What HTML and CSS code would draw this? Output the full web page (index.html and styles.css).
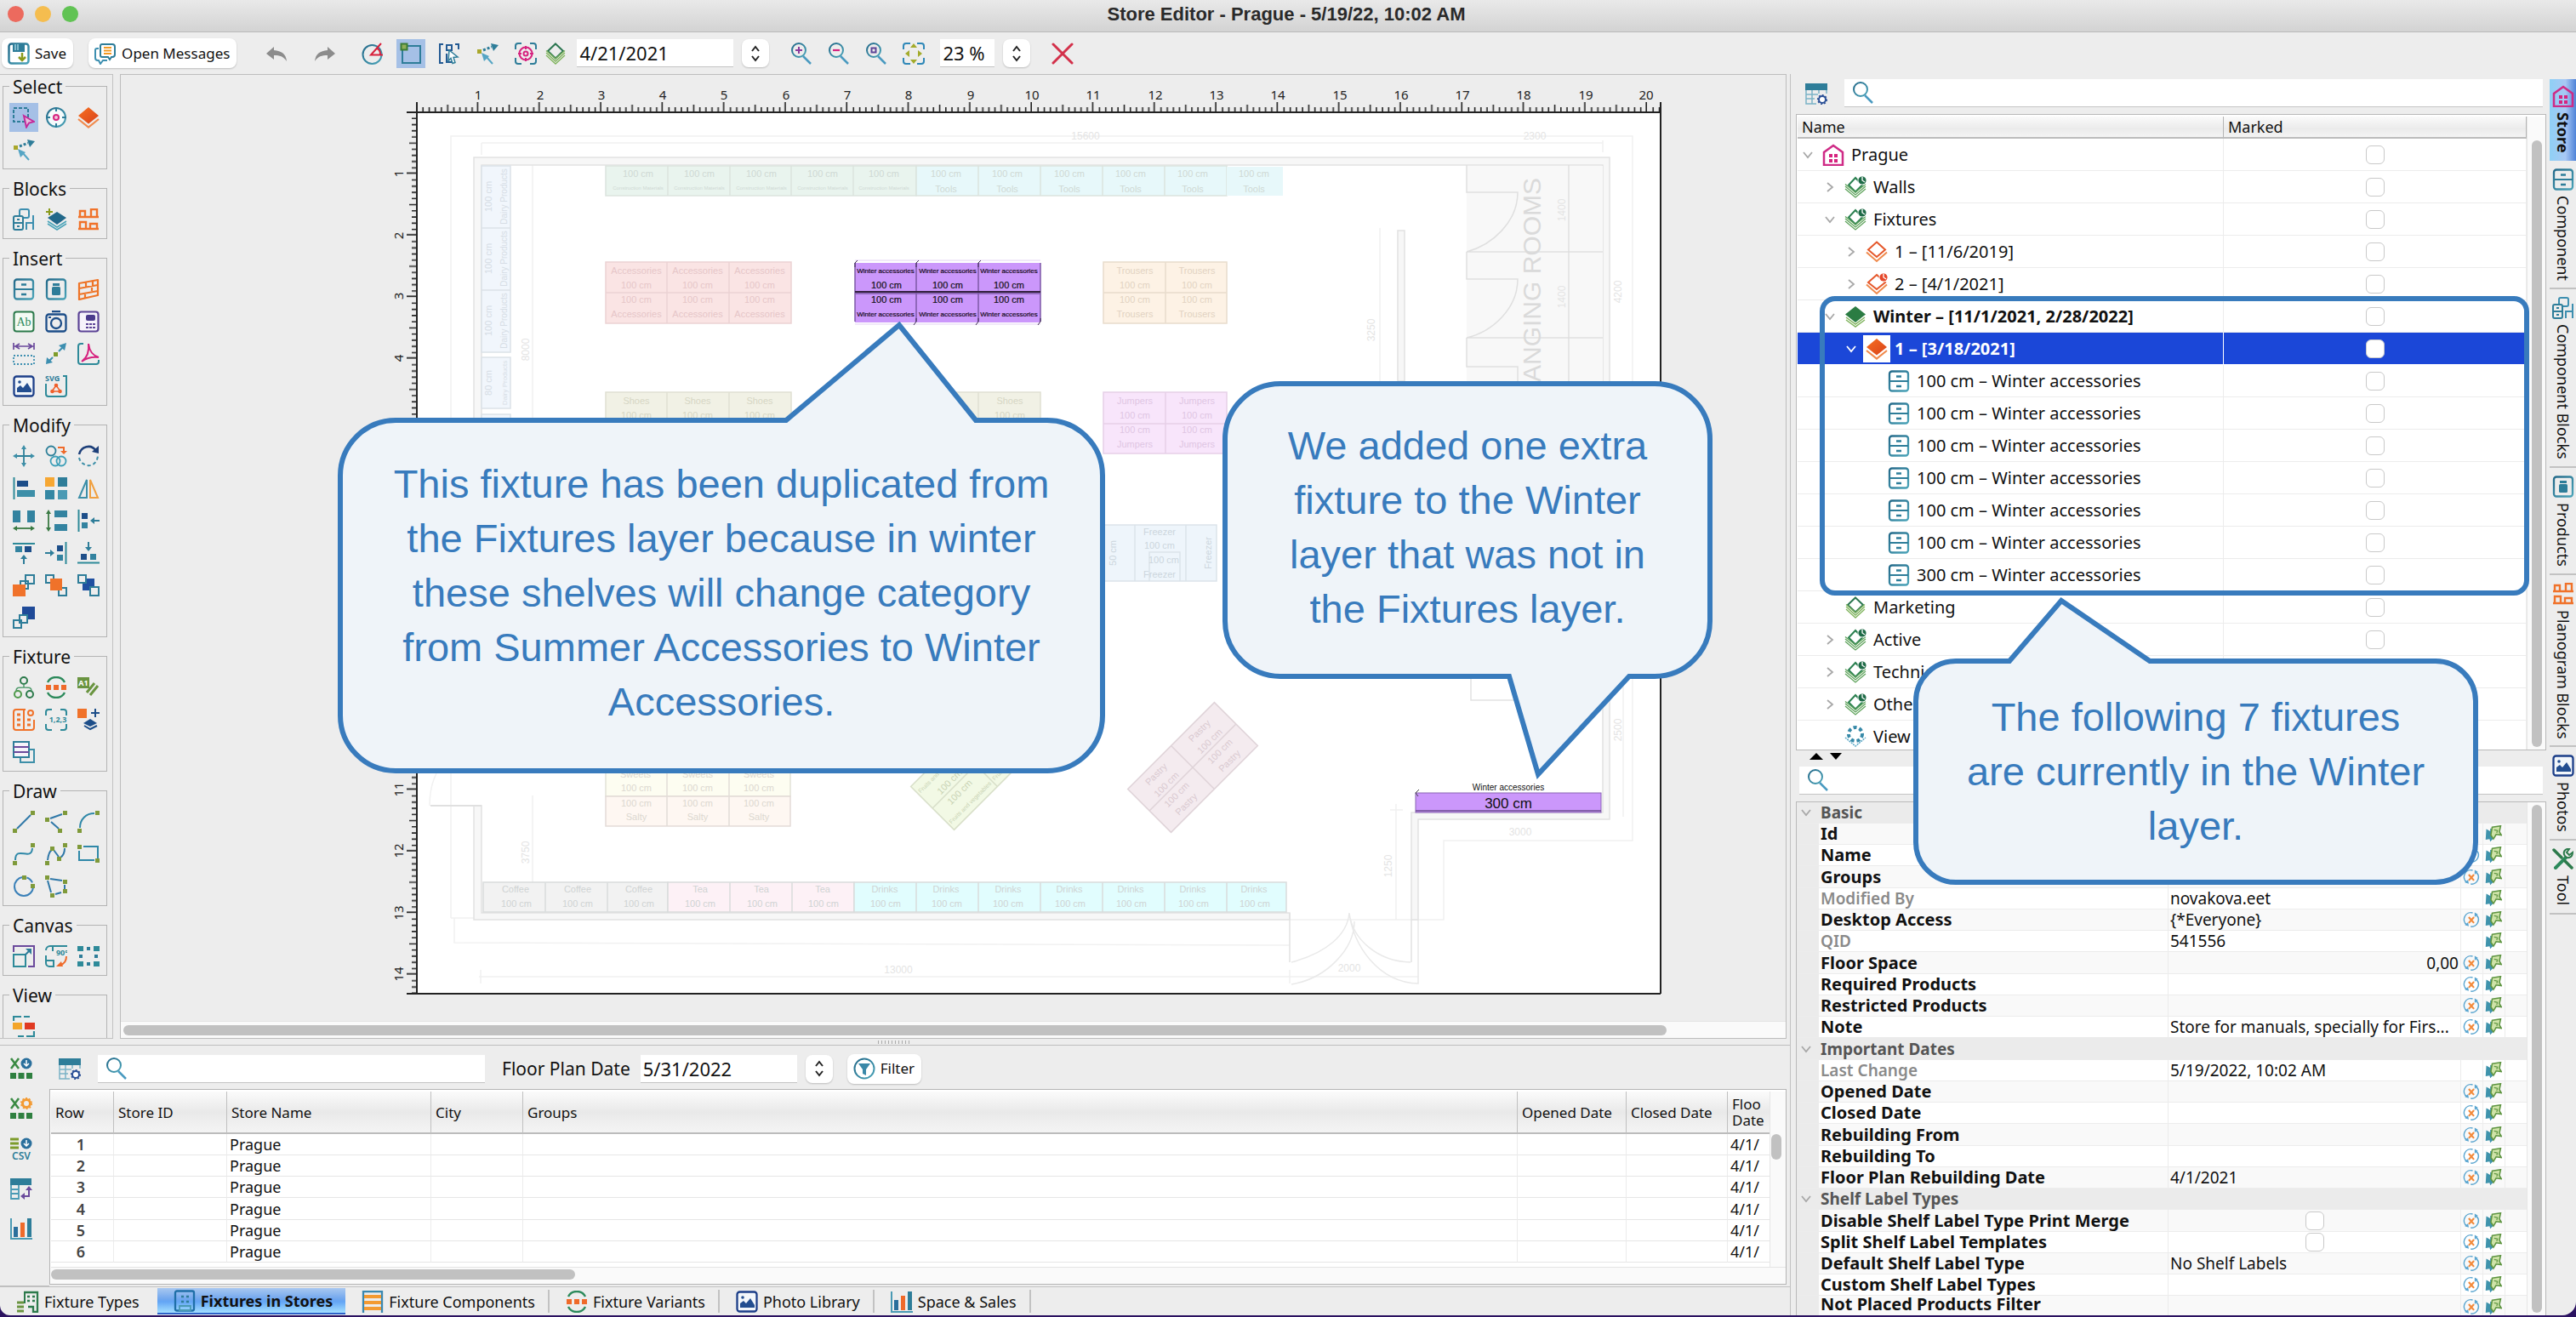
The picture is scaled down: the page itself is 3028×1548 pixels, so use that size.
FILE: index.html
```html
<!DOCTYPE html>
<html lang="en">
<head>
<meta charset="utf-8">
<title>Store Editor - Prague</title>
<link rel="stylesheet" href="styles.css">
</head>
<body>
<svg class="defs" aria-hidden="true">
  <defs>
    <linearGradient id="gt" x1="0" y1="0" x2="1" y2="1"><stop offset="0" stop-color="#246a8a"/><stop offset="1" stop-color="#4aa3b8"/></linearGradient>
    <linearGradient id="go" x1="0" y1="0" x2="1" y2="1"><stop offset="0" stop-color="#f7701f"/><stop offset="1" stop-color="#d9421c"/></linearGradient>
    <symbol id="save" viewBox="0 0 26 26"><rect x="1.500" y="1.500" width="23" height="23" rx="3" fill="#fff" stroke="url(#gt)" stroke-width="2.500"/><path d="M6 1h14v10H6z" fill="#2e7d99"/><path d="M9 2v7M12 2v7" stroke="#9fd0de" stroke-width="1.500"/><path d="M17 12v9M13 17l4 4 4-4" fill="none" stroke="#8a9a1c" stroke-width="2.500"/></symbol>
    <symbol id="msg" viewBox="0 0 26 26"><path d="M9 2h12a3 3 0 0 1 3 3v9a3 3 0 0 1-3 3h-1l-2 3-2-3H9a2 2 0 0 1-2-2V4a2 2 0 0 1 2-2z" fill="#fff" stroke="#2e7d99" stroke-width="2"/><path d="M5 7H3a2 2 0 0 0-2 2v9a3 3 0 0 0 3 3h1l2 4 3-4h5" fill="none" stroke="#3d8fb0" stroke-width="2"/><path d="M11 6h9M11 9.500h9M11 13h9" stroke="#f39a21" stroke-width="2"/></symbol>
    <symbol id="undo" viewBox="0 0 26 26"><path d="M10 5L1 13l9 7v-5c7 0 11 1 15 7-1-9-6-12-15-13z" fill="#8c8c8c"/></symbol>
    <symbol id="redo" viewBox="0 0 26 26"><path d="M16 5l9 8-9 7v-5c-7 0-11 1-15 7 1-9 6-12 15-13z" fill="#8c8c8c"/></symbol>
    <symbol id="angle" viewBox="0 0 26 26"><circle cx="12.500" cy="14" r="11" fill="none" stroke="url(#gt)" stroke-width="2"/><path d="M23 1L11 14.500h14M18 7c3 1 4 4 4 7" fill="none" stroke="#d8213c" stroke-width="2"/></symbol>
    <symbol id="snap" viewBox="0 0 26 26"><rect x="3" y="4" width="21" height="20" fill="none" stroke="#2e7d99" stroke-width="2"/><rect x="1.500" y="1.500" width="7" height="7" fill="#8fae5a" stroke="#3c7d35" stroke-width="2"/></symbol>
    <symbol id="selcomp" viewBox="0 0 26 26"><path d="M6 2H2v22h4M20 2h4v6M10 9V3h6v6h-6zM10 13v10h6" fill="none" stroke="#235a93" stroke-width="2"/><path d="M13 9l10 8-5 .5 2 6-3 1-2-6-3 3z" fill="#fff" stroke="#2e7d99" stroke-width="1.500"/></symbol>
    <symbol id="vec" viewBox="0 0 26 26"><rect x="1" y="8" width="5" height="5" fill="#a9a72b"/><path d="M8 9l10-4" stroke="#2e7d99" stroke-width="3" stroke-dasharray="3 2"/><path d="M17 1l9 2-6 7z" fill="#2e7d99"/><path d="M11 16l8 9" stroke="#55a5c4" stroke-width="2"/><path d="M6 12l9 4-6 6z" fill="#55a5c4"/></symbol>
    <symbol id="target" viewBox="0 0 26 26"><path d="M8 1H4a3 3 0 0 0-3 3v4M18 1h4a3 3 0 0 1 3 3v4M1 18v4a3 3 0 0 0 3 3h4M25 18v4a3 3 0 0 1-3 3h-4" fill="none" stroke="#2e7d99" stroke-width="2"/><circle cx="13" cy="13" r="7.500" fill="none" stroke="#d6237f" stroke-width="2"/><circle cx="13" cy="13" r="2.500" fill="none" stroke="#d6237f" stroke-width="2"/><path d="M13 4v4M13 18v4M4 13h4M18 13h4" stroke="#d6237f" stroke-width="2"/></symbol>
    <symbol id="lg" viewBox="0 0 26 26"><path d="M13 1.500l9 8.500-9 8.500L4 10z" fill="none" stroke="#2b7650" stroke-width="2"/><path d="M2 12l11 10 11-10M2 15l11 10 11-10M2 9.500l11 9.500 11-9.500" fill="none" stroke="#7fb35c" stroke-width="1.300"/></symbol>
    <symbol id="lgc" viewBox="0 0 26 26"><path d="M13 2l8 8.500-8 8-8-8z" fill="none" stroke="#2b8050" stroke-width="2"/><path d="M1 12l12 10 12-10M1 15l12 10 12-10M1 9.500l12 9.500 12-9.500" fill="none" stroke="#5fa35c" stroke-width="1.300"/><circle cx="21" cy="5" r="5.500" fill="#fff"/><circle cx="21" cy="5" r="4.600" fill="#1f6b47"/><path d="M21 1v4l3 2" stroke="#fff" stroke-width="1.300" fill="none"/></symbol>
    <symbol id="lgf" viewBox="0 0 26 26"><path d="M13 1l12 9.500L13 20 1 10.500z" fill="#2b7c43"/><path d="M2 14l11 8 11-8M2 17l11 8 11-8" fill="none" stroke="#7fb35c" stroke-width="1.500"/></symbol>
    <symbol id="lo" viewBox="0 0 26 26"><path d="M13 1.500l10 9-10 8.500L3 10.500z" fill="none" stroke="#e5572a" stroke-width="2"/><path d="M1 13.500l12 10.500 12-10.500" fill="none" stroke="#ef8a4d" stroke-width="2"/></symbol>
    <symbol id="loc" viewBox="0 0 26 26"><path d="M13 2l10 9-10 8-10-8z" fill="none" stroke="#e5572a" stroke-width="2"/><path d="M1 13.500l12 10.500 12-10.500" fill="none" stroke="#ef8a4d" stroke-width="2"/><circle cx="21" cy="5" r="5.500" fill="#fff"/><circle cx="21" cy="5" r="4.600" fill="#e5472a"/><path d="M21 1v4l3 2" stroke="#fff" stroke-width="1.300" fill="none"/></symbol>
    <symbol id="lof" viewBox="0 0 26 26"><path d="M13 1l12 10-12 9.500L1 11z" fill="url(#go)"/><path d="M1 15l12 9.500L25 15" fill="none" stroke="#f08a4d" stroke-width="2.200"/></symbol>
    <symbol id="views" viewBox="0 0 26 26"><circle cx="13" cy="10" r="8" fill="none" stroke="#3789a8" stroke-width="4" stroke-dasharray="4 3"/><path d="M1 14l12 10 12-10" fill="none" stroke="#55a5c4" stroke-width="1.500" stroke-dasharray="2 1"/></symbol>
    <symbol id="marquee" viewBox="0 0 26 26"><rect x="1" y="2" width="17" height="16" fill="none" stroke="#2e7d99" stroke-width="2" stroke-dasharray="4 2"/><path d="M13 11l12 7-6 1.500-3 5z" fill="#e6bcdc" stroke="#c42a9b" stroke-width="2"/></symbol>
    <symbol id="aim" viewBox="0 0 26 26"><circle cx="13" cy="13" r="11" fill="#f4fafb" stroke="url(#gt)" stroke-width="2"/><path d="M13 1v5M13 20v5M1 13h5M20 13h5" stroke="#2e7d99" stroke-width="2"/><circle cx="13" cy="13" r="3" fill="#f3c6dd" stroke="#d6237f" stroke-width="2"/></symbol>
    <symbol id="cblocks" viewBox="0 0 26 26"><rect x="8" y="1" width="11" height="10" rx="2" fill="none" stroke="#3d8fb0" stroke-width="2"/><rect x="1" y="9" width="11" height="16" rx="2" fill="#ededed" stroke="#2e7d99" stroke-width="2"/><path d="M1 17h11M5 13h3M5 21h3" stroke="#2e7d99" stroke-width="2"/><path d="M16 25v-8h8M24 8v17" fill="none" stroke="#3d8fb0" stroke-width="2"/></symbol>
    <symbol id="addl" viewBox="0 0 26 26"><path d="M5 0v8M1 4h8" stroke="#8a9a1c" stroke-width="2"/><path d="M14 4l11 7-11 8L3 11z" fill="#22688a"/><path d="M3 15l11 7 11-7M3 18l11 7 11-7" fill="none" stroke="#4aa3b8" stroke-width="1.500"/></symbol>
    <symbol id="pblocks" viewBox="0 0 26 26"><path d="M1 10h24M1 24h24M3 10V3h6v7M16 10V1h7v9M3 24v-8h7v8M15 24v-6h8v6" fill="none" stroke="#f0722a" stroke-width="2.400"/></symbol>
    <symbol id="cab" viewBox="0 0 26 26"><rect x="2" y="1.500" width="22" height="23" rx="3" fill="none" stroke="url(#gt)" stroke-width="2.300"/><path d="M2 13h22" stroke="#2e7d99" stroke-width="2"/><path d="M10 7.500h6M10 19h6" stroke="#2e7d99" stroke-width="2.500"/></symbol>
    <symbol id="prod" viewBox="0 0 26 26"><rect x="2" y="1.500" width="22" height="23" rx="3" fill="none" stroke="url(#gt)" stroke-width="2.300"/><rect x="9" y="6" width="8" height="3" fill="#2e7d99"/><rect x="8" y="10" width="10" height="10" rx="1.500" fill="#2e7d99"/></symbol>
    <symbol id="bricks" viewBox="0 0 26 26"><path d="M2 6l22-4v18L2 25zM2 12l22-4M2 19l22-4M10 5v5M17 9v6M9 17v6M18 4v5" fill="none" stroke="#ee7427" stroke-width="2.200" stroke-linejoin="round"/></symbol>
    <symbol id="ab" viewBox="0 0 26 26"><rect x="1.500" y="1.500" width="23" height="23" rx="3" fill="#f4fbf4" stroke="#2c7a4b" stroke-width="2"/><text x="13" y="18" font-family="Liberation Serif, serif" font-size="14" text-anchor="middle" fill="#2c8a5b">Ab</text></symbol>
    <symbol id="cam" viewBox="0 0 26 26"><path d="M8 1h10" stroke="#1d4e89" stroke-width="2.500"/><rect x="1.500" y="4.500" width="23" height="20" rx="3" fill="none" stroke="#1d4e89" stroke-width="2.300"/><circle cx="13" cy="15" r="6" fill="none" stroke="#1d4e89" stroke-width="2.300"/><path d="M4 8h3" stroke="#1d4e89" stroke-width="2"/></symbol>
    <symbol id="calc" viewBox="0 0 26 26"><rect x="1.500" y="1.500" width="23" height="23" rx="3" fill="#f6f3fb" stroke="#5c4496" stroke-width="2.200"/><rect x="10" y="5" width="11" height="7" rx="2" fill="#4a3a8c"/><path d="M10 16h11M10 20h11" stroke="#5c4496" stroke-width="2.200" stroke-dasharray="3 1"/></symbol>
    <symbol id="dim" viewBox="0 0 26 26"><path d="M1 0v8M25 0v8M4 4h18M8 1L3 4l5 3M18 1l5 3-5 3" fill="none" stroke="#6b4a9c" stroke-width="1.700"/><path d="M1 15h24v10H1z" fill="none" stroke="#3d8fb0" stroke-width="1.800" stroke-dasharray="2 2"/></symbol>
    <symbol id="dbl" viewBox="0 0 26 26"><path d="M21 5l-5 5M9 17l-5 5" stroke="#3d8fb0" stroke-width="2"/><path d="M25 0l-2 9-7-6zM1 25l1-8 7 6z" fill="#3d8fb0"/><rect x="10" y="11" width="5" height="5" fill="#7d9c2b"/></symbol>
    <symbol id="pdf" viewBox="0 0 26 26"><path d="M7 1H4a3 3 0 0 0-3 3v18a3 3 0 0 0 3 3h18a3 3 0 0 0 3-3v-2" fill="none" stroke="#2e8a99" stroke-width="2"/><path d="M5 22c7-5 9-12 8-21 1 8 5 14 12 16-7-1-13 0-20 5z" fill="none" stroke="#d6237f" stroke-width="2"/></symbol>
    <symbol id="pic" viewBox="0 0 26 26"><rect x="1.500" y="1.500" width="23" height="23" rx="3" fill="#f3f7fb" stroke="#1d3f89" stroke-width="2.300"/><path d="M5 20V15l4-3 3 3 5-6 5 8v3z" fill="#234e90"/><circle cx="8" cy="8" r="1.800" fill="#234e90"/></symbol>
    <symbol id="svgi" viewBox="0 0 26 26"><text x="0" y="7" font-family="Noto Sans, sans-serif" font-weight="700" font-size="9" fill="#2e7d99">SVG</text><path d="M21 1h4v21a3 3 0 0 1-3 3H4a3 3 0 0 1-3-3V10" fill="none" stroke="#2e8a99" stroke-width="2"/><path d="M8 19l5-7 5 7z" fill="none" stroke="#ef5f2a" stroke-width="1.500"/><circle cx="13" cy="12" r="2.300" fill="#ef5f2a"/><circle cx="8.500" cy="19" r="2.300" fill="#ef5f2a"/><circle cx="17.500" cy="19" r="2.300" fill="#ef5f2a"/></symbol>
    <symbol id="move" viewBox="0 0 26 26"><path d="M13 3v20M3 13h20" stroke="#2e8099" stroke-width="1.800"/><path d="M13 0l3 5h-6zM13 26l3-5h-6zM0 13l5-3v6zM26 13l-5-3v6z" fill="#3d8fa8"/></symbol>
    <symbol id="dup" viewBox="0 0 26 26"><circle cx="7" cy="7" r="5.500" fill="none" stroke="#2e8099" stroke-width="1.800"/><circle cx="12" cy="19" r="5.500" fill="none" stroke="#3d9fb8" stroke-width="1.800"/><circle cx="19" cy="19" r="5.500" fill="none" stroke="#3d9fb8" stroke-width="1.800"/><path d="M15 3h7v5" fill="none" stroke="#ef6a2a" stroke-width="2"/><path d="M18 7h8l-4 4z" fill="#ef6a2a"/></symbol>
    <symbol id="rot" viewBox="0 0 26 26"><path d="M2 11C4 2 16-2 22 7" fill="none" stroke="#1d3f79" stroke-width="2.500"/><path d="M25 1v9l-8-2z" fill="#1d3f79"/><path d="M2 15c2 11 20 14 22-2" fill="none" stroke="#3d8fa8" stroke-width="2" stroke-dasharray="4 3"/></symbol>
    <symbol id="al" viewBox="0 0 26 26"><path d="M1.500 0v26" stroke="#2e8a99" stroke-width="2"/><rect x="5" y="4" width="13" height="7" fill="#1d4e89"/><rect x="5" y="15" width="21" height="8" fill="#3d8fa8"/></symbol>
    <symbol id="grid4" viewBox="0 0 26 26"><rect width="11" height="11" fill="#f6a733"/><rect x="15" width="11" height="11" fill="#2e7d99"/><rect y="15" width="11" height="11" fill="#3587a3"/><rect x="15" y="15" width="11" height="11" fill="#4a9ab4"/></symbol>
    <symbol id="mirror" viewBox="0 0 26 26"><path d="M11 3v21H2z" fill="none" stroke="#3d8fa8" stroke-width="2"/><path d="M15 3v21h9z" fill="none" stroke="#f0a040" stroke-width="2"/></symbol>
    <symbol id="dh" viewBox="0 0 26 26"><path d="M0 1h9v14H0zM17 1h9v14h-9z" fill="#3383a0"/><path d="M3 22h20" stroke="#3a7a43" stroke-width="1.800"/><path d="M0 22l5-3v6zM26 22l-5-3v6z" fill="#3a7a43"/></symbol>
    <symbol id="dv" viewBox="0 0 26 26"><path d="M11 1h15v8H11zM11 17h15v8H11z" fill="#3383a0"/><path d="M4 3v20" stroke="#3a7a43" stroke-width="1.800"/><path d="M4 0l3 5H1zM4 26l3-5H1z" fill="#3a7a43"/></symbol>
    <symbol id="sl" viewBox="0 0 26 26"><path d="M1.500 0v26" stroke="#2e8a99" stroke-width="2"/><path d="M5 4h7v7H5z" fill="#1d4e89"/><path d="M5 15h7v7H5z" fill="#3383a0"/><path d="M19 13h7" stroke="#2e7d99" stroke-width="2"/><path d="M15 13l5-4v8z" fill="#2e7d99"/></symbol>
    <symbol id="st" viewBox="0 0 26 26"><path d="M0 2h26" stroke="#2e8a99" stroke-width="2"/><path d="M3 5h8v7H3z" fill="#3383a0"/><path d="M14 5h8v7h-8z" fill="#1d4e89"/><path d="M13 20v6" stroke="#2e7d99" stroke-width="2"/><path d="M13 15l4 5H9z" fill="#2e7d99"/></symbol>
    <symbol id="sr" viewBox="0 0 26 26"><path d="M24.500 0v26" stroke="#2e8a99" stroke-width="2"/><path d="M14 4h7v7h-7z" fill="#1d4e89"/><path d="M14 15h7v7h-7z" fill="#3383a0"/><path d="M0 13h7" stroke="#2e7d99" stroke-width="2"/><path d="M11 13l-5-4v8z" fill="#2e7d99"/></symbol>
    <symbol id="sb" viewBox="0 0 26 26"><path d="M0 24.500h26" stroke="#2e8a99" stroke-width="2"/><path d="M4 14h7v7H4z" fill="#1d4e89"/><path d="M15 14h7v7h-7z" fill="#3383a0"/><path d="M13 0v6" stroke="#2e7d99" stroke-width="2"/><path d="M13 11l4-5H9z" fill="#2e7d99"/></symbol>
    <symbol id="tofront" viewBox="0 0 26 26"><path d="M15 1h10v10H15zM9 8h9v9H9z" fill="#ededed" stroke="#2e7d99" stroke-width="2"/><path d="M0 12h15v14H0z" fill="#f0722a"/></symbol>
    <symbol id="fwd" viewBox="0 0 26 26"><path d="M1 1h9v9H1zM16 16h9v9h-9z" fill="#ededed" stroke="#2e7d99" stroke-width="2"/><path d="M6 5h14v14H6z" fill="#f0722a"/></symbol>
    <symbol id="bwd" viewBox="0 0 26 26"><path d="M6 5h14v14H6z" fill="#1f4fa0"/><path d="M1 1h9v9H1zM15 15h10v10H15z" fill="#ededed" stroke="#2e7d99" stroke-width="2"/></symbol>
    <symbol id="toback" viewBox="0 0 26 26"><path d="M11 0h15v15H11z" fill="#1f4a98"/><path d="M8 10h9v9H8zM1 16h9v9H1z" fill="#ededed" stroke="#2e7d99" stroke-width="2"/></symbol>
    <symbol id="tree" viewBox="0 0 26 26"><circle cx="13" cy="5" r="4" fill="none" stroke="#2c7a4b" stroke-width="2"/><circle cx="6" cy="21" r="4" fill="none" stroke="#4f9a4b" stroke-width="2"/><circle cx="20" cy="21" r="4" fill="none" stroke="#2c7a4b" stroke-width="2"/><path d="M13 9v4M4 17c0-4 2-4 9-4s9 0 9 4" fill="none" stroke="#4f9a6b" stroke-width="1.500"/></symbol>
    <symbol id="variant" viewBox="0 0 26 26"><path d="M3 7c4-8 16-8 20 0M3 19c4 8 16 8 20 0" fill="none" stroke="#2c8a5b" stroke-width="2.400"/><path d="M1 10h6v6H1zM10 10h6v6h-6zM19 10h6v6h-6z" fill="#ef6a2a"/></symbol>
    <symbol id="a1" viewBox="0 0 26 26"><path d="M0 1h14v13H0z" fill="#6a9440"/><text x="7" y="11" font-family="Noto Sans, sans-serif" font-weight="700" font-size="9" text-anchor="middle" fill="#fff">A1</text><path d="M11 19l9-11M15 22l9-11" stroke="#6a9440" stroke-width="3"/></symbol>
    <symbol id="shelfset" viewBox="0 0 26 26"><path d="M15 1H4a3 3 0 0 0-3 3v18a3 3 0 0 0 3 3h18a3 3 0 0 0 3-3v-9M13 1v24" fill="none" stroke="#f0722a" stroke-width="2"/><path d="M5 7h4M5 13h4M5 19h4M17 13h4M17 19h4" stroke="#f0722a" stroke-width="3"/><circle cx="21" cy="5" r="3" fill="none" stroke="#f0722a" stroke-width="2"/></symbol>
    <symbol id="num" viewBox="0 0 26 26"><path d="M8 1H4a3 3 0 0 0-3 3v4M18 1h4a3 3 0 0 1 3 3v4M1 18v4a3 3 0 0 0 3 3h4M25 18v4a3 3 0 0 1-3 3h-4" fill="none" stroke="#2e8a99" stroke-width="2"/><text x="15" y="16" font-family="Noto Sans, sans-serif" font-weight="700" font-size="9" text-anchor="middle" fill="#2e8a99">1,2,3</text></symbol>
    <symbol id="addb" viewBox="0 0 26 26"><path d="M0 0h11v11H0z" fill="#f0722a"/><path d="M21 0v10M16 5h10" stroke="#1d4e89" stroke-width="2"/><path d="M15 12l8 5-8 4-8-4z" fill="#1d4e89"/><path d="M8 20l7 4 8-4" fill="none" stroke="#1d4e89" stroke-width="2"/></symbol>
    <symbol id="copyc" viewBox="0 0 26 26"><path d="M9 20v5h16V10h-5" fill="none" stroke="#3d8fa8" stroke-width="2"/><path d="M1 1h18v18H1z" fill="#f5f3fa" stroke="#2e7d99" stroke-width="2"/><path d="M1 7h18M1 13h18" stroke="#6b4a9c" stroke-width="2"/></symbol>
    <symbol id="line" viewBox="0 0 26 26"><path d="M5 21L21 5" stroke="#2f78a8" stroke-width="2"/><path d="M0 21h5v5H0zM21 0h5v5h-5z" fill="#7f9a3a"/></symbol>
    <symbol id="poly" viewBox="0 0 26 26"><path d="M6 9l14-5M7 13l9 8" stroke="#2f78a8" stroke-width="2"/><path d="M0 8h5v5H0zM21 0h5v5h-5zM15 21h5v5h-5z" fill="#7f9a3a"/></symbol>
    <symbol id="arc" viewBox="0 0 26 26"><path d="M3 20C3 10 10 3 20 3" fill="none" stroke="#2f88a8" stroke-width="2"/><path d="M0 21h5v5H0zM21 0h5v5h-5z" fill="#7f9a3a"/></symbol>
    <symbol id="curve" viewBox="0 0 26 26"><path d="M3 20C3 2 22 22 23 6" fill="none" stroke="#2f88a8" stroke-width="2"/><path d="M0 21h5v5H0zM21 0h5v5h-5z" fill="#7f9a3a"/></symbol>
    <symbol id="mcurve" viewBox="0 0 26 26"><path d="M3 20c1-8 3-11 5-12M10 8l6 8M18 17c3-2 5-6 5-11" fill="none" stroke="#2f78a8" stroke-width="2"/><path d="M0 21h5v5H0zM21 0h5v5h-5zM6 4h5v5H6zM14 16h5v5h-5z" fill="#7f9a3a"/></symbol>
    <symbol id="rect" viewBox="0 0 26 26"><path d="M7 4h17v14M20 20H2V9" fill="none" stroke="#2f88a8" stroke-width="2"/><path d="M0 2h5v5H0zM21 18h5v5h-5z" fill="#7f9a3a"/></symbol>
    <symbol id="circ" viewBox="0 0 26 26"><circle cx="13" cy="13" r="11" fill="none" stroke="#3a80b8" stroke-width="2" stroke-dasharray="50 5 9 5"/><path d="M11 0h5v5h-5zM21 10h5v5h-5z" fill="#7f9a3a"/></symbol>
    <symbol id="pgon" viewBox="0 0 26 26"><path d="M6 4l14 2M23 11v5M19 20l-7 2M7 20L3 6" fill="none" stroke="#2f78a8" stroke-width="2"/><path d="M0 0h5v5H0zM21 5h5v5h-5zM21 16h5v5h-5zM6 21h5v5H6z" fill="#7f9a3a"/></symbol>
    <symbol id="resize" viewBox="0 0 26 26"><path d="M1 8V1h24v24h-7" fill="none" stroke="#6b4a9c" stroke-width="2"/><path d="M1 11h14v14H1z" fill="none" stroke="#2e8a99" stroke-width="2"/><path d="M14 12l5-5" stroke="#2e7d99" stroke-width="2"/><path d="M22 4v7l-7-7z" fill="#2e7d99"/></symbol>
    <symbol id="r90" viewBox="0 0 26 26"><path d="M1 6a5 5 0 0 1 5-5h20M9 1v6M1 12v9a4 4 0 0 0 4 4h5v-7H1" fill="none" stroke="#2e8a99" stroke-width="2"/><text x="20" y="12" font-family="Noto Sans, sans-serif" font-weight="700" font-size="9" text-anchor="middle" fill="#2e8a99">90°</text><path d="M25 13c0 6-3 9-7 10" fill="none" stroke="#ef6a2a" stroke-width="2"/><path d="M13 25l6-6 2 6z" fill="#ef6a2a"/></symbol>
    <symbol id="dots" viewBox="0 0 26 26"><path d="M0 1h7v6H0zM19 1h7v6h-7zM0 19h7v6H0zM19 19h7v6h-7z" fill="#2e8a99"/><path d="M11 2h4v4h-4zM11 20h4v4h-4zM2 11h4v4H2zM20 11h4v4h-4z" fill="#2e7d99"/></symbol>
    <symbol id="viewm" viewBox="0 0 26 26"><path d="M1 7V2h9M13 2h7M6 25h7M16 25h9v-6" fill="none" stroke="#2e8a99" stroke-width="2.200"/><path d="M0 9h11v8H0z" fill="#f3a52a"/><path d="M14 9h12v8H14z" fill="#e03a22"/></symbol>
    <symbol id="glass" viewBox="0 0 26 26"><circle cx="10" cy="9" r="8" fill="none" stroke="url(#gt)" stroke-width="2"/><path d="M15 16l9 9" stroke="#4a9ac0" stroke-width="2.500"/></symbol>
    <symbol id="zin" viewBox="0 0 26 26"><use href="#glass"/><path d="M10 5v8M6 9h8" stroke="#8a3a9c" stroke-width="2"/></symbol>
    <symbol id="zout" viewBox="0 0 26 26"><use href="#glass"/><path d="M6 9h8" stroke="#d6237f" stroke-width="2.200"/></symbol>
    <symbol id="z1" viewBox="0 0 26 26"><use href="#glass"/><path d="M7.500 6.500h5v5h-5z" fill="none" stroke="#5c4496" stroke-width="2"/></symbol>
    <symbol id="fit" viewBox="0 0 26 26"><path d="M9 1H4a3 3 0 0 0-3 3v4M17 1h5a3 3 0 0 1 3 3v4M1 18v4a3 3 0 0 0 3 3h5M25 18v4a3 3 0 0 1-3 3h-5" fill="none" stroke="#2f88b8" stroke-width="2"/><path d="M13 1l4 5H9zM13 25l4-5H9zM3 13l5-4v8zM23 13l-5-4v8z" fill="#a3ab2b"/></symbol>
    <symbol id="close" viewBox="0 0 26 26"><path d="M2 2l22 22M24 2L2 24" stroke="#d3304a" stroke-width="3" stroke-linecap="round"/></symbol>
    <symbol id="tset" viewBox="0 0 26 26"><path d="M1 8h24v5M1 8v17h12M1 14h14M1 19h10M8 8v17M16 8v5" fill="none" stroke="#7bb3c6" stroke-width="1.500"/><path d="M0 1h26v8H0z" fill="#2e7d99"/><circle cx="20" cy="20" r="4" fill="#fff" stroke="#2a4f96" stroke-width="2"/><circle cx="20" cy="20" r="5.300" fill="none" stroke="#2a4f96" stroke-width="1.500" stroke-dasharray="2 2"/></symbol>
    <symbol id="xd" viewBox="0 0 26 26"><path d="M1 1l9 12M10 1L1 13" stroke="#3a8a43" stroke-width="2.500"/><circle cx="19" cy="7" r="6.500" fill="#2a6f9c"/><path d="M19 3v7M16 7l3 3 3-3" stroke="#fff" stroke-width="1.500" fill="none"/><path d="M0 18h7v7H0zM9.500 18h7v7h-7zM19 18h7v7h-7z" fill="#2f8040"/></symbol>
    <symbol id="xs" viewBox="0 0 26 26"><path d="M1 1l9 12M10 1L1 13" stroke="#3a8a43" stroke-width="2.500"/><circle cx="19" cy="7" r="4.500" fill="none" stroke="#f39a31" stroke-width="3"/><circle cx="19" cy="7" r="6.300" fill="none" stroke="#f39a31" stroke-width="1.500" stroke-dasharray="2 2"/><path d="M0 18h7v7H0zM9.500 18h7v7h-7zM19 18h7v7h-7z" fill="#2f8040"/></symbol>
    <symbol id="csv" viewBox="0 0 26 26"><path d="M0 2h10M0 7h10M0 12h10" stroke="#7d9c2b" stroke-width="3"/><circle cx="19" cy="7" r="6.500" fill="#2a6f9c"/><path d="M19 3v7M16 7l3 3 3-3" stroke="#fff" stroke-width="1.500" fill="none"/><text x="13" y="25.500" font-family="Noto Sans, sans-serif" font-weight="600" font-size="12" text-anchor="middle" fill="#2e7d99">CSV</text></symbol>
    <symbol id="tflip" viewBox="0 0 26 26"><path d="M1 8v17h9V8M1 14h9M1 19h9" fill="none" stroke="#4a9ab4" stroke-width="1.800"/><path d="M0 1h25v8H0z" fill="#2e7d99"/><path d="M22 14v8h-6" fill="none" stroke="#6b4a9c" stroke-width="2"/><path d="M18 15l4-5 4 5zM17 18v8l-5-4z" fill="#6b4a9c"/></symbol>
    <symbol id="chart" viewBox="0 0 26 26"><path d="M1 1v24h25" fill="none" stroke="#4a9ab4" stroke-width="2"/><path d="M4 11h5v12H4z" fill="#2a6f9c"/><path d="M12 6h5v17h-5z" fill="#ef6a2a"/><path d="M20 1h5v22h-5z" fill="#2e7d99"/></symbol>
    <symbol id="filter" viewBox="0 0 26 26"><circle cx="13" cy="13" r="11.500" fill="#fff" stroke="url(#gt)" stroke-width="2"/><path d="M6 7h14l-5 7v7l-4-2v-5z" fill="#3a88a8"/></symbol>
    <symbol id="ftype" viewBox="0 0 26 26"><path d="M8 2h16v23h-5v-6h-6" fill="none" stroke="#2c7a4b" stroke-width="2.300"/><path d="M12 7h3M18 7h3M12 12h3M18 12h3" stroke="#2c7a4b" stroke-width="2.500"/><path d="M0 14h8M0 19h8M0 24h8" stroke="#6a9440" stroke-width="3"/><path d="M9 2v13" stroke="#2c7a4b" stroke-width="2"/></symbol>
    <symbol id="fstore" viewBox="0 0 26 26"><rect x="2" y="1.500" width="22" height="23" rx="2" fill="none" stroke="#1f6fa8" stroke-width="2.300"/><path d="M9 8h3M15 8h3M9 14h3M15 14h3" stroke="#2e7d99" stroke-width="2.500"/><path d="M7 19h13v5H7z" fill="none" stroke="#4a9ab4" stroke-width="1.800"/></symbol>
    <symbol id="fcomp" viewBox="0 0 26 26"><path d="M2 26V1h22v25" fill="none" stroke="#3a88b0" stroke-width="2.300"/><path d="M3 7h20M3 14h20M3 21h20" stroke="#f39a31" stroke-width="4"/></symbol>
    <symbol id="house" viewBox="0 0 26 26"><path d="M2 25V10L13 2l11 8v15z" fill="none" stroke="#cf2b86" stroke-width="2.500"/><path d="M8 12h4v4H8zM14 12h4v4h-4zM8 18h4v4H8zM14 18h4v4h-4z" fill="#d6237f"/></symbol>
    <symbol id="tool" viewBox="0 0 26 26"><path d="M4 23L17 10" stroke="#2c8a5b" stroke-width="4" stroke-linecap="round"/><path d="M24 5l-4 3-3-3 3-4c-5-1-8 4-5 8 3 4 9 2 9-4z" fill="#ededed" stroke="#2c7a4b" stroke-width="2"/><path d="M2 2l9 9M15 15l8 8" stroke="#2c7a4b" stroke-width="3.500" stroke-linecap="round"/></symbol>
    <symbol id="reset" viewBox="0 0 26 26"><path d="M15 2.500A10.500 10.500 0 0 0 6 21M12 23.500A10.500 10.500 0 0 0 21 6" fill="none" stroke="#5aa5cf" stroke-width="2"/><path d="M9 23l-1-6-5 4zM18 2l0 7 5-4z" fill="#5aa5cf"/><path d="M9 9l8 9M17 9l-8 9" stroke="#f2893a" stroke-width="2.800"/></symbol>
    <symbol id="apply" viewBox="0 0 26 26"><path d="M2 6l6 3v-4l6 2-2 14-4 4-1-4-6 1z" fill="#3f93ac"/><path d="M11 3l13-2-2 9 3 5-8-1-4 7-4-6z" fill="#cfe3a8" stroke="#5d9440" stroke-width="2"/><path d="M14 7l5 1-1 4" fill="none" stroke="#5d9440" stroke-width="1.500"/></symbol>
    <symbol id="cdn" viewBox="0 0 14 14"><path d="M2 4l5 6 5-6" fill="none" stroke="currentColor" stroke-width="1.800"/></symbol>
    <symbol id="crt" viewBox="0 0 14 14"><path d="M4 2l6 5-6 5" fill="none" stroke="currentColor" stroke-width="1.800"/></symbol>
    <symbol id="spin" viewBox="0 0 14 20"><path d="M3 7l4-5 4 5M3 13l4 5 4-5" fill="none" stroke="#222" stroke-width="2"/></symbol>
    <pattern id="rh" x="490" y="0" width="72.300" height="200" patternUnits="userSpaceOnUse">
      <path d="M7.200 126v6M14.500 126v6M21.700 126v6M28.900 126v6M43.400 126v6M50.600 126v6M57.800 126v6M65 126v6M36.200 123v9M71.500 120v12" stroke="#222" stroke-width="1.600"/>
    </pattern>
    <pattern id="rv" x="0" y="132" width="600" height="72.400" patternUnits="userSpaceOnUse">
      <path d="M484 7.200h6M484 14.500h6M484 21.700h6M484 29h6M484 43.400h6M484 50.700h6M484 57.900h6M484 65.200h6M481 36.200h9M478 71.500h12" stroke="#222" stroke-width="1.600"/>
    </pattern>
  </defs>
</svg>

<div class="window">
  <header class="titlebar">
    <span class="light red"></span><span class="light yellow"></span><span class="light green"></span>
    <h1>Store Editor - Prague - 5/19/22, 10:02 AM</h1>
  </header>

  <div class="toolbar">
    <button class="btn"><svg class="i"><use href="#save"/></svg>Save</button>
    <button class="btn open"><svg class="i"><use href="#msg"/></svg>Open Messages</button>
    <button class="tb undo" aria-label="Undo"><svg class="i"><use href="#undo"/></svg></button>
    <button class="tb redo" aria-label="Redo"><svg class="i"><use href="#redo"/></svg></button>
    <div class="modes">
      <button class="tb" aria-label="Angle"><svg class="i"><use href="#angle"/></svg></button>
      <button class="tb on" aria-label="Snap"><svg class="i"><use href="#snap"/></svg></button>
      <button class="tb" aria-label="Select component"><svg class="i"><use href="#selcomp"/></svg></button>
      <button class="tb" aria-label="Vector"><svg class="i"><use href="#vec"/></svg></button>
      <button class="tb" aria-label="Focus"><svg class="i"><use href="#target"/></svg></button>
    </div>
    <svg class="i"><use href="#lg"/></svg>
    <input class="field date" type="text" value="4/21/2021" aria-label="Layer date">
    <button class="spin" aria-label="Change date"><svg><use href="#spin"/></svg></button>
    <div class="zooms">
      <button class="tb" aria-label="Zoom in"><svg class="i"><use href="#zin"/></svg></button>
      <button class="tb" aria-label="Zoom out"><svg class="i"><use href="#zout"/></svg></button>
      <button class="tb" aria-label="Zoom 1:1"><svg class="i"><use href="#z1"/></svg></button>
      <button class="tb" aria-label="Fit"><svg class="i"><use href="#fit"/></svg></button>
    </div>
    <input class="field pct" type="text" value="23 %" aria-label="Zoom">
    <button class="spin" aria-label="Change zoom"><svg><use href="#spin"/></svg></button>
    <button class="tb cancel" aria-label="Close"><svg class="i"><use href="#close"/></svg></button>
  </div>

  <div class="main">
    <div class="work">
      <div class="upper">
        <nav class="tools">
          <fieldset><legend>Select</legend>
            <button class="tb on" aria-label="Marquee"><svg class="i"><use href="#marquee"/></svg></button><button class="tb" aria-label="Aim"><svg class="i"><use href="#aim"/></svg></button><button class="tb" aria-label="Layer"><svg class="i"><use href="#lof"/></svg></button>
            <button class="tb" aria-label="Vector"><svg class="i"><use href="#vec"/></svg></button>
          </fieldset>
          <fieldset><legend>Blocks</legend>
            <button class="tb" aria-label="Component blocks"><svg class="i"><use href="#cblocks"/></svg></button><button class="tb" aria-label="Add layer"><svg class="i"><use href="#addl"/></svg></button><button class="tb" aria-label="Planogram blocks"><svg class="i"><use href="#pblocks"/></svg></button>
          </fieldset>
          <fieldset><legend>Insert</legend>
            <button class="tb" aria-label="Fixture"><svg class="i"><use href="#cab"/></svg></button><button class="tb" aria-label="Product"><svg class="i"><use href="#prod"/></svg></button><button class="tb" aria-label="Wall"><svg class="i"><use href="#bricks"/></svg></button>
            <button class="tb" aria-label="Text"><svg class="i"><use href="#ab"/></svg></button><button class="tb" aria-label="Photo"><svg class="i"><use href="#cam"/></svg></button><button class="tb" aria-label="Calculation"><svg class="i"><use href="#calc"/></svg></button>
            <button class="tb" aria-label="Dimension"><svg class="i"><use href="#dim"/></svg></button><button class="tb" aria-label="Connector"><svg class="i"><use href="#dbl"/></svg></button><button class="tb" aria-label="PDF"><svg class="i"><use href="#pdf"/></svg></button>
            <button class="tb" aria-label="Image"><svg class="i"><use href="#pic"/></svg></button><button class="tb" aria-label="Vector image"><svg class="i"><use href="#svgi"/></svg></button>
          </fieldset>
          <fieldset><legend>Modify</legend>
            <button class="tb" aria-label="Move"><svg class="i"><use href="#move"/></svg></button><button class="tb" aria-label="Duplicate"><svg class="i"><use href="#dup"/></svg></button><button class="tb" aria-label="Rotate"><svg class="i"><use href="#rot"/></svg></button>
            <button class="tb" aria-label="Align"><svg class="i"><use href="#al"/></svg></button><button class="tb" aria-label="Array"><svg class="i"><use href="#grid4"/></svg></button><button class="tb" aria-label="Mirror"><svg class="i"><use href="#mirror"/></svg></button>
            <button class="tb" aria-label="Distribute horizontally"><svg class="i"><use href="#dh"/></svg></button><button class="tb" aria-label="Distribute vertically"><svg class="i"><use href="#dv"/></svg></button><button class="tb" aria-label="Snap left"><svg class="i"><use href="#sl"/></svg></button>
            <button class="tb" aria-label="Snap top"><svg class="i"><use href="#st"/></svg></button><button class="tb" aria-label="Snap right"><svg class="i"><use href="#sr"/></svg></button><button class="tb" aria-label="Snap bottom"><svg class="i"><use href="#sb"/></svg></button>
            <button class="tb" aria-label="To front"><svg class="i"><use href="#tofront"/></svg></button><button class="tb" aria-label="Forward"><svg class="i"><use href="#fwd"/></svg></button><button class="tb" aria-label="Backward"><svg class="i"><use href="#bwd"/></svg></button>
            <button class="tb" aria-label="To back"><svg class="i"><use href="#toback"/></svg></button>
          </fieldset>
          <fieldset><legend>Fixture</legend>
            <button class="tb" aria-label="Group"><svg class="i"><use href="#tree"/></svg></button><button class="tb" aria-label="Variant"><svg class="i"><use href="#variant"/></svg></button><button class="tb" aria-label="Rename"><svg class="i"><use href="#a1"/></svg></button>
            <button class="tb" aria-label="Shelf set"><svg class="i"><use href="#shelfset"/></svg></button><button class="tb" aria-label="Numbering"><svg class="i"><use href="#num"/></svg></button><button class="tb" aria-label="Add block"><svg class="i"><use href="#addb"/></svg></button>
            <button class="tb" aria-label="Copy"><svg class="i"><use href="#copyc"/></svg></button>
          </fieldset>
          <fieldset><legend>Draw</legend>
            <button class="tb" aria-label="Line"><svg class="i"><use href="#line"/></svg></button><button class="tb" aria-label="Polyline"><svg class="i"><use href="#poly"/></svg></button><button class="tb" aria-label="Arc"><svg class="i"><use href="#arc"/></svg></button>
            <button class="tb" aria-label="Curve"><svg class="i"><use href="#curve"/></svg></button><button class="tb" aria-label="Multi curve"><svg class="i"><use href="#mcurve"/></svg></button><button class="tb" aria-label="Rectangle"><svg class="i"><use href="#rect"/></svg></button>
            <button class="tb" aria-label="Circle"><svg class="i"><use href="#circ"/></svg></button><button class="tb" aria-label="Polygon"><svg class="i"><use href="#pgon"/></svg></button>
          </fieldset>
          <fieldset><legend>Canvas</legend>
            <button class="tb" aria-label="Resize"><svg class="i"><use href="#resize"/></svg></button><button class="tb" aria-label="Rotate 90"><svg class="i"><use href="#r90"/></svg></button><button class="tb" aria-label="Grid"><svg class="i"><use href="#dots"/></svg></button>
          </fieldset>
          <fieldset><legend>View</legend>
            <button class="tb" aria-label="View mode"><svg class="i"><use href="#viewm"/></svg></button>
          </fieldset>
        </nav>

        <section class="canvas">
          <div class="stage">
            <svg class="plan" viewBox="142 88 1956 1111" width="1956" height="1111">
              <rect x="491" y="132" width="1461" height="1036" fill="#fff"/>
              <rect x="490" y="110" width="1463" height="22" fill="url(#rh)"/>
              <rect x="476" y="133" width="14" height="1035" fill="url(#rv)"/>
              <path d="M490 120v1049M478 132h1475M478 1168h1474M1952 120v1048" fill="none" stroke="#222" stroke-width="2"/>
              <g class="rl" text-anchor="middle">
                <text x="562" y="117">1</text><text x="635" y="117">2</text><text x="707" y="117">3</text><text x="779" y="117">4</text><text x="851" y="117">5</text><text x="924" y="117">6</text><text x="996" y="117">7</text><text x="1068" y="117">8</text><text x="1141" y="117">9</text><text x="1213" y="117">10</text><text x="1285" y="117">11</text><text x="1358" y="117">12</text><text x="1430" y="117">13</text><text x="1502" y="117">14</text><text x="1575" y="117">15</text><text x="1647" y="117">16</text><text x="1719" y="117">17</text><text x="1791" y="117">18</text><text x="1864" y="117">19</text><text x="1935" y="117">20</text>
                <text transform="translate(474 204) rotate(-90)">1</text><text transform="translate(474 277) rotate(-90)">2</text><text transform="translate(474 348) rotate(-90)">3</text><text transform="translate(474 421) rotate(-90)">4</text><text transform="translate(474 928) rotate(-90)">11</text><text transform="translate(474 1000) rotate(-90)">12</text><text transform="translate(474 1073) rotate(-90)">13</text><text transform="translate(474 1145) rotate(-90)">14</text>
              </g>
              <g fill="none" stroke="#f1f1f1" stroke-width="1.500">
                <path d="M530 1079V160H1919V988H1697V1081H1516M566 168H1884M566 168v14M626 194V492M626 935V1073M530 1079H557M534 1079V1108L1516 1111M563 1148H1667M565 1140v16M1516 1140v16M1641 945V1081M1634 952h15M1622 268V448M1908 798V960M1844 194V447M1884 165v14M506 947H566M505 947c0-15 3-28 8-38"/>
                <path d="M1518 1131C1560 1120 1584 1098 1586 1073C1590 1105 1620 1130 1658 1131M1518 1157C1560 1150 1592 1115 1592 1083M1586 1073C1590 1110 1620 1155 1667 1156V1081" stroke="#e9e9e9"/>
              </g>
              <g fill="#f7f7f7" stroke="#e2e2e2" stroke-width="1.500">
                <path d="M557 492V185H1892V963H1667V1081H1659V955H1884V194H566V492z"/>
                <path d="M557 947H566V1073H1516V1081H557z"/>
                <path d="M1643 448V271h8V448zM1516 1073v58M1659 1081v50" />
                <path d="M506 947H566" stroke="#e0e0e0" stroke-width="2"/>
                <path d="M1729 798v25h60V798" fill="#fff"/>
              </g>
              <rect x="1724" y="195" width="160" height="260" fill="#f8f8f8"/>
              <path d="M1724 194v32h60c0 35-30 62-60 70h160M1724 296v32h60c0 35-30 62-60 69h160M1724 397v34h60v20M1844 194v260" fill="none" stroke="#dfdfdf" stroke-width="1.500"/>
              <g font-size="12" fill="#e4e4e4" text-anchor="middle">
                <text transform="translate(1811 449) rotate(-90)" font-size="30" text-anchor="start" fill="#dadada">ANGING ROOMS</text>
                <text x="1276" y="164">15600</text><text x="1804" y="164">2300</text><text x="1056" y="1144">13000</text><text x="1586" y="1142">2000</text><text x="1787" y="982">3000</text>
                <text transform="translate(1840 247) rotate(-90)">1400</text><text transform="translate(1840 349) rotate(-90)">1400</text><text transform="translate(1616 388) rotate(-90)">3250</text><text transform="translate(1906 343) rotate(-90)">4200</text><text transform="translate(1906 858) rotate(-90)">2500</text><text transform="translate(1636 1018) rotate(-90)">1250</text><text transform="translate(622 411) rotate(-90)">8000</text><text transform="translate(622 1002) rotate(-90)">3750</text>
              </g>
              <g stroke="#dce2e8" stroke-width="1.500" fill="#f1f6fc"><path d="M566 195h34v73h-34zM566 268h34v73h-34zM566 341h34v73h-34zM566 420h34v60h-34zM566 487h34v10h-34z"/></g>
              <g font-size="11" fill="#d6dde5" text-anchor="middle">
                <text transform="translate(578 231) rotate(-90)">100 cm</text><text transform="translate(596 231) rotate(-90)" font-size="10">Dairy Products</text>
                <text transform="translate(578 304) rotate(-90)">100 cm</text><text transform="translate(596 304) rotate(-90)" font-size="10">Dairy Products</text>
                <text transform="translate(578 377) rotate(-90)">100 cm</text><text transform="translate(596 377) rotate(-90)" font-size="10">Dairy Products</text>
                <text transform="translate(578 450) rotate(-90)">80 cm</text><text transform="translate(596 450) rotate(-90)" font-size="8">Dairy Products</text>
              </g>
              <g stroke="#dbe3de" stroke-width="1.500">
                <path d="M712 195h73v35h-73zM785 195h73v35h-73zM858 195h72v35h-72zM930 195h73v35h-73zM1003 195h74v35h-74z" fill="#e9f4ee"/>
                <path d="M1077 195h73v35h-73zM1150 195h73v35h-73zM1223 195h73v35h-73zM1296 195h73v35h-73zM1369 195h73v35h-73z" fill="#e7f8fa"/>
              </g>
              <rect x="1442" y="196" width="66" height="34" fill="#e7f8fa"/>
              <g font-size="11" fill="#cfd9d4" text-anchor="middle">
                <text x="750" y="208">100 cm</text><text x="822" y="208">100 cm</text><text x="895" y="208">100 cm</text><text x="967" y="208">100 cm</text><text x="1039" y="208">100 cm</text><text x="1112" y="208">100 cm</text><text x="1184" y="208">100 cm</text><text x="1257" y="208">100 cm</text><text x="1329" y="208">100 cm</text><text x="1402" y="208">100 cm</text><text x="1474" y="208">100 cm</text>
                <g font-size="6"><text x="750" y="223">Construction Materials</text><text x="822" y="223">Construction Materials</text><text x="895" y="223">Construction Materials</text><text x="967" y="223">Construction Materials</text><text x="1039" y="223">Construction Materials</text></g>
                <text x="1112" y="226">Tools</text><text x="1184" y="226">Tools</text><text x="1257" y="226">Tools</text><text x="1329" y="226">Tools</text><text x="1402" y="226">Tools</text><text x="1474" y="226">Tools</text>
              </g>
              <path d="M712 308h218v72H712zM712 344h218M784 308v72M857 308v72" fill="#fae4e4" stroke="#ebd2d3" stroke-width="1.500"/>
              <g font-size="11" fill="#e6c6c8" text-anchor="middle">
                <text x="748" y="322">Accessories</text><text x="820" y="322">Accessories</text><text x="893" y="322">Accessories</text><text x="748" y="339">100 cm</text><text x="820" y="339">100 cm</text><text x="893" y="339">100 cm</text><text x="748" y="356">100 cm</text><text x="820" y="356">100 cm</text><text x="893" y="356">100 cm</text><text x="748" y="373">Accessories</text><text x="820" y="373">Accessories</text><text x="893" y="373">Accessories</text>
              </g>
              <path d="M1297 308h145v72h-145zM1297 344h145M1370 308v72" fill="#fdf2e5" stroke="#e8dccc" stroke-width="1.500"/>
              <path d="M1297 461h145v72h-145zM1297 498h145M1370 461v72" fill="#f8e5fb" stroke="#e6cfe8" stroke-width="1.500"/>
              <g font-size="11" fill="#e2d3c2" text-anchor="middle"><text x="1334" y="322">Trousers</text><text x="1407" y="322">Trousers</text><text x="1334" y="339">100 cm</text><text x="1407" y="339">100 cm</text><text x="1334" y="356">100 cm</text><text x="1407" y="356">100 cm</text><text x="1334" y="373">Trousers</text><text x="1407" y="373">Trousers</text></g>
              <g font-size="11" fill="#dfc6e3" text-anchor="middle"><text x="1334" y="475">Jumpers</text><text x="1407" y="475">Jumpers</text><text x="1334" y="492">100 cm</text><text x="1407" y="492">100 cm</text><text x="1334" y="509">100 cm</text><text x="1407" y="509">100 cm</text><text x="1334" y="526">Jumpers</text><text x="1407" y="526">Jumpers</text></g>
              <path d="M712 461h218v72H712zM784 461v72M857 461v72M1005 461h218v72h-218zM1077 461v72M1150 461v72" fill="#f1f1e5" stroke="#e0e0d2" stroke-width="1.500"/>
              <g font-size="11" fill="#d6d6c4" text-anchor="middle"><text x="748" y="475">Shoes</text><text x="820" y="475">Shoes</text><text x="893" y="475">Shoes</text><text x="1187" y="475">Shoes</text><text x="748" y="492">100 cm</text><text x="820" y="492">100 cm</text><text x="893" y="492">100 cm</text><text x="1187" y="492">100 cm</text></g>
              <path d="M1250 617h180v66h-180zM1334 617v66M1394 617v66M1351 649h36v34h-36z" fill="#eef5fb" stroke="#dbe3ea" stroke-width="1.500"/>
              <g font-size="11" fill="#ccd5dd" text-anchor="middle"><text x="1363" y="629">Freezer</text><text x="1363" y="645">100 cm</text><text x="1368" y="662">100 cm</text><text x="1363" y="679">Freezer</text><text transform="translate(1312 650) rotate(-90)">50 cm</text><text transform="translate(1424 650) rotate(-90)">Freezer</text></g>

              <rect x="1005" y="309" width="218" height="70" fill="#cb97fb"/>
              <path d="M1005 309v69M1077 309v69M1150 309v69M1223 309v69M1005 345h218" stroke="#7d5aa6" stroke-width="1.500"/>
              <path d="M1005 306h218M1005 381h218" stroke="#e3d3f3" stroke-width="1"/>
              <path d="M1005 343h218" stroke="#33203f" stroke-width="2"/>
              <path d="M1008 306l-3 3v5M1080 306l-3 3v5M1153 306l-3 3v5M1074 382l3-4v-4M1147 382l3-4v-4M1220 382l3-4v-4" fill="none" stroke="#3c2a50" stroke-width="1"/>
              <g font-size="8" fill="#150b20" stroke="#150b20" stroke-width=".2" text-anchor="middle">
                <text x="1041" y="321">Winter accessories</text><text x="1114" y="321">Winter accessories</text><text x="1186" y="321">Winter accessories</text><text x="1041" y="372">Winter accessories</text><text x="1114" y="372">Winter accessories</text><text x="1186" y="372">Winter accessories</text>
                <g font-size="11" fill="#111"><text x="1042" y="339">100 cm</text><text x="1114" y="339">100 cm</text><text x="1186" y="339">100 cm</text><text x="1042" y="356">100 cm</text><text x="1114" y="356">100 cm</text><text x="1186" y="356">100 cm</text></g>
              </g>

              <path d="M712 880h217v56H712z" fill="#fdfdf1" stroke="#e2e2d8" stroke-width="1.500"/><path d="M712 936h217v35H712z" fill="#fef7f2" stroke="#e3dcd8" stroke-width="1.500"/><path d="M784 880v91M857 880v91" stroke="#e2ddd8" stroke-width="1.500"/>
              <g font-size="11" fill="#dcd8d0" text-anchor="middle"><text x="747" y="914">Sweets</text><text x="820" y="914">Sweets</text><text x="892" y="914">Sweets</text><text x="748" y="930">100 cm</text><text x="820" y="930">100 cm</text><text x="892" y="930">100 cm</text><text x="748" y="948">100 cm</text><text x="820" y="948">100 cm</text><text x="892" y="948">100 cm</text><text x="748" y="964">Salty</text><text x="820" y="964">Salty</text><text x="892" y="964">Salty</text></g>
              <g transform="translate(1147 899) rotate(-45)" font-size="11" text-anchor="middle" fill="#c9d3b4"><path d="M-72-36h144v72h-144zM-72 0h144M0-36v72" fill="#f2f9e5" stroke="#d8dfc9" stroke-width="1.500"/><text x="-36" y="-22" font-size="7">Fruits and vegetables</text><text x="-36" y="-4">100 cm</text><text x="-36" y="13">100 cm</text><text x="-36" y="29" font-size="7">Fruits and vegetables</text><text x="36" y="13">100 cm</text><text x="36" y="29" font-size="7">Fruits and vegetables</text></g>
              <g transform="translate(1402 902) rotate(-45)" font-size="11" text-anchor="middle" fill="#d9c9cf"><path d="M-72-36h144v72h-144zM-72 0h144M0-36v72" fill="#f4ebef" stroke="#dfd3d8" stroke-width="1.500"/><text x="-36" y="-21">Pastry</text><text x="-36" y="-4">100 cm</text><text x="-36" y="13">100 cm</text><text x="-36" y="29">Pastry</text><text x="36" y="-21">Pastry</text><text x="36" y="-4">100 cm</text><text x="36" y="13">100 cm</text><text x="36" y="29">Pastry</text></g>

              <g stroke="#d9dcdc" stroke-width="1.500"><path d="M568 1037h73v35h-73zM641 1037h73v35h-73zM714 1037h71v35h-71z" fill="#f2f2f2"/><path d="M785 1037h73v35h-73zM858 1037h73v35h-73zM931 1037h73v35h-73z" fill="#fdf1f6"/><path d="M1004 1037h73v35h-73zM1077 1037h73v35h-73zM1150 1037h73v35h-73zM1223 1037h73v35h-73zM1296 1037h73v35h-73zM1369 1037h73v35h-73zM1442 1037h70v35h-70z" fill="#e1fdfe"/></g>
              <g font-size="11" fill="#cfd3d3" text-anchor="middle">
                <text x="606" y="1049">Coffee</text><text x="679" y="1049">Coffee</text><text x="751" y="1049">Coffee</text><text x="823" y="1049">Tea</text><text x="895" y="1049">Tea</text><text x="967" y="1049">Tea</text><text x="1040" y="1049">Drinks</text><text x="1112" y="1049">Drinks</text><text x="1185" y="1049">Drinks</text><text x="1257" y="1049">Drinks</text><text x="1329" y="1049">Drinks</text><text x="1402" y="1049">Drinks</text><text x="1474" y="1049">Drinks</text>
                <text x="607" y="1066">100 cm</text><text x="679" y="1066">100 cm</text><text x="751" y="1066">100 cm</text><text x="823" y="1066">100 cm</text><text x="896" y="1066">100 cm</text><text x="968" y="1066">100 cm</text><text x="1041" y="1066">100 cm</text><text x="1113" y="1066">100 cm</text><text x="1185" y="1066">100 cm</text><text x="1258" y="1066">100 cm</text><text x="1330" y="1066">100 cm</text><text x="1403" y="1066">100 cm</text><text x="1475" y="1066">100 cm</text>
              </g>
              <rect x="1664" y="932" width="218" height="23" fill="#cb97fb" stroke="#8a66b4"/>
              <path d="M1664 953h218" stroke="#6d4d90" stroke-width="1.500"/><path d="M1668 928l-4 4 3 4" fill="none" stroke="#444"/>
              <g text-anchor="middle" fill="#111"><text x="1773" y="929" font-size="10">Winter accessories</text><text x="1773" y="950" font-size="17">300 cm</text></g>
            </svg>

            <div class="callout one"><p>This fixture has been duplicated from<br>the Fixtures layer because in winter<br>these shelves will change category<br>from Summer Accessories to Winter<br>Accessories.</p>
              <svg viewBox="915 370 240 130"><path class="f" d="M924 498v-4L1057 381l90 113v4z"/><path class="s" d="M922 494h2L1057 382l90 112h2"/></svg></div>
            <div class="callout two"><p>We added one extra<br>fixture to the Winter<br>layer that was not in<br>the Fixtures layer.</p>
              <svg viewBox="1765 790 160 130"><path class="f" d="M1774 791v4L1808 911l107-116v-4z"/><path class="s" d="M1772 795h2L1808 910l107-115h2"/></svg></div>
          </div>
          <div class="hbar"><span class="thumb"></span></div>
        </section>
      </div>

      <div class="grip"></div>

      <section class="lower">
        <nav class="exports">
          <button class="tb" aria-label="Export"><svg class="i"><use href="#xd"/></svg></button>
          <button class="tb" aria-label="Export settings"><svg class="i"><use href="#xs"/></svg></button>
          <button class="tb" aria-label="CSV"><svg class="i"><use href="#csv"/></svg></button>
          <button class="tb" aria-label="Transpose"><svg class="i"><use href="#tflip"/></svg></button>
          <button class="tb" aria-label="Chart"><svg class="i"><use href="#chart"/></svg></button>
        </nav>
        <div class="listing">
          <div class="listbar">
            <button class="tb" aria-label="Table settings"><svg class="i"><use href="#tset"/></svg></button>
            <label class="search"><svg class="i"><use href="#glass"/></svg><input type="text" aria-label="Search stores"></label>
            <label class="lbl" for="fpd">Floor Plan Date</label>
            <input class="field date" id="fpd" type="text" value="5/31/2022">
            <button class="spin" aria-label="Change date"><svg><use href="#spin"/></svg></button>
            <button class="btn filter"><svg class="i"><use href="#filter"/></svg>Filter</button>
          </div>
          <div class="gridbox">
            <div class="gridrow">
              <table class="stores">
                <colgroup><col class="c1"><col class="c2"><col class="c3"><col class="c4"><col><col class="c6"><col class="c7"><col class="c8"></colgroup>
                <thead><tr><th>Row</th><th>Store ID</th><th>Store Name</th><th>City</th><th>Groups</th><th>Opened Date</th><th>Closed Date</th><th>Floo<br>Date</th></tr></thead>
                <tbody>
                  <tr><td>1</td><td></td><td>Prague</td><td></td><td></td><td></td><td></td><td>4/1/</td></tr>
                  <tr><td>2</td><td></td><td>Prague</td><td></td><td></td><td></td><td></td><td>4/1/</td></tr>
                  <tr><td>3</td><td></td><td>Prague</td><td></td><td></td><td></td><td></td><td>4/1/</td></tr>
                  <tr><td>4</td><td></td><td>Prague</td><td></td><td></td><td></td><td></td><td>4/1/</td></tr>
                  <tr><td>5</td><td></td><td>Prague</td><td></td><td></td><td></td><td></td><td>4/1/</td></tr>
                  <tr><td>6</td><td></td><td>Prague</td><td></td><td></td><td></td><td></td><td>4/1/</td></tr>
                </tbody>
              </table>
              <div class="vbar"><span class="thumb"></span></div>
            </div>
            <div class="hbar"><span class="thumb"></span></div>
          </div>
        </div>
      </section>

      <nav class="tabs">
        <button><svg class="i"><use href="#ftype"/></svg>Fixture Types</button>
        <button class="sel"><svg class="i"><use href="#fstore"/></svg>Fixtures in Stores</button>
        <button><svg class="i"><use href="#fcomp"/></svg>Fixture Components</button>
        <button><svg class="i"><use href="#variant"/></svg>Fixture Variants</button>
        <button><svg class="i"><use href="#pic"/></svg>Photo Library</button>
        <button><svg class="i"><use href="#chart"/></svg>Space &amp; Sales</button>
      </nav>
    </div>

    <aside class="side">
      <div class="panels">
        <div class="treebar">
          <button class="tb" aria-label="Table settings"><svg class="i"><use href="#tset"/></svg></button>
          <label class="search"><svg class="i"><use href="#glass"/></svg><input type="text" aria-label="Search layers"></label>
        </div>
        <div class="treebox">
          <table class="layers">
            <colgroup><col><col class="mk"></colgroup>
            <thead><tr><th>Name</th><th>Marked</th></tr></thead>
            <tbody>
              <tr><td><div class="n l1"><svg class="c"><use href="#cdn"/></svg><svg class="i"><use href="#house"/></svg>Prague</div></td><td><input type="checkbox" aria-label="Prague"></td></tr>
              <tr><td><div class="n l2"><svg class="c"><use href="#crt"/></svg><svg class="i"><use href="#lgc"/></svg>Walls</div></td><td><input type="checkbox" aria-label="Walls"></td></tr>
              <tr><td><div class="n l2"><svg class="c"><use href="#cdn"/></svg><svg class="i"><use href="#lgc"/></svg>Fixtures</div></td><td><input type="checkbox" aria-label="Fixtures"></td></tr>
              <tr><td><div class="n l3"><svg class="c"><use href="#crt"/></svg><svg class="i"><use href="#lo"/></svg>1 – [11/6/2019]</div></td><td><input type="checkbox" aria-label="Version 1"></td></tr>
              <tr><td><div class="n l3"><svg class="c"><use href="#crt"/></svg><svg class="i"><use href="#loc"/></svg>2 – [4/1/2021]</div></td><td><input type="checkbox" aria-label="Version 2"></td></tr>
              <tr class="b"><td><div class="n l2"><svg class="c"><use href="#cdn"/></svg><svg class="i"><use href="#lgf"/></svg>Winter – [11/1/2021, 2/28/2022]</div></td><td><input type="checkbox" aria-label="Winter"></td></tr>
              <tr class="b cur"><td><div class="n l3"><svg class="c"><use href="#cdn"/></svg><svg class="i"><use href="#lof"/></svg>1 – [3/18/2021]</div></td><td><input type="checkbox" aria-label="Winter version 1"></td></tr>
              <tr><td><div class="n l4"><svg class="i"><use href="#cab"/></svg>100 cm – Winter accessories</div></td><td><input type="checkbox" aria-label="Fixture 1"></td></tr>
              <tr><td><div class="n l4"><svg class="i"><use href="#cab"/></svg>100 cm – Winter accessories</div></td><td><input type="checkbox" aria-label="Fixture 2"></td></tr>
              <tr><td><div class="n l4"><svg class="i"><use href="#cab"/></svg>100 cm – Winter accessories</div></td><td><input type="checkbox" aria-label="Fixture 3"></td></tr>
              <tr><td><div class="n l4"><svg class="i"><use href="#cab"/></svg>100 cm – Winter accessories</div></td><td><input type="checkbox" aria-label="Fixture 4"></td></tr>
              <tr><td><div class="n l4"><svg class="i"><use href="#cab"/></svg>100 cm – Winter accessories</div></td><td><input type="checkbox" aria-label="Fixture 5"></td></tr>
              <tr><td><div class="n l4"><svg class="i"><use href="#cab"/></svg>100 cm – Winter accessories</div></td><td><input type="checkbox" aria-label="Fixture 6"></td></tr>
              <tr><td><div class="n l4"><svg class="i"><use href="#cab"/></svg>300 cm – Winter accessories</div></td><td><input type="checkbox" aria-label="Fixture 7"></td></tr>
              <tr><td><div class="n l2"><svg class="c"></svg><svg class="i"><use href="#lg"/></svg>Marketing</div></td><td><input type="checkbox" aria-label="Marketing"></td></tr>
              <tr><td><div class="n l2"><svg class="c"><use href="#crt"/></svg><svg class="i"><use href="#lgc"/></svg>Active</div></td><td><input type="checkbox" aria-label="Active"></td></tr>
              <tr><td><div class="n l2"><svg class="c"><use href="#crt"/></svg><svg class="i"><use href="#lgc"/></svg>Technical</div></td><td></td></tr>
              <tr><td><div class="n l2"><svg class="c"><use href="#crt"/></svg><svg class="i"><use href="#lgc"/></svg>Other</div></td><td></td></tr>
              <tr><td><div class="n l2"><svg class="c"></svg><svg class="i"><use href="#views"/></svg>View</div></td><td></td></tr>
            </tbody>
          </table>
          <div class="vbar"><span class="thumb"></span></div>
        </div>
        <div class="split"><svg viewBox="0 0 40 10"><path d="M0 9l8-8 8 8zM24 1h14l-7 8z"/></svg></div>
        <label class="search props-search"><svg class="i"><use href="#glass"/></svg><input type="text" aria-label="Search properties"></label>
        <div class="propbox">
          <table class="props">
            <colgroup><col class="p1"><col class="p2"><col><col class="p4"><col class="p4"><col class="p4"></colgroup>
            <tbody>
              <tr class="sec"><td><svg class="c"><use href="#cdn"/></svg></td><th colspan="5">Basic</th></tr>
              <tr><td></td><th>Id</th><td></td><td></td><td><svg><use href="#apply"/></svg></td><td></td></tr>
              <tr><td></td><th>Name</th><td></td><td><svg><use href="#reset"/></svg></td><td><svg><use href="#apply"/></svg></td><td></td></tr>
              <tr><td></td><th>Groups</th><td></td><td><svg><use href="#reset"/></svg></td><td><svg><use href="#apply"/></svg></td><td></td></tr>
              <tr class="ro"><td></td><th>Modified By</th><td>novakova.eet</td><td></td><td><svg><use href="#apply"/></svg></td><td></td></tr>
              <tr><td></td><th>Desktop Access</th><td>{*Everyone}</td><td><svg><use href="#reset"/></svg></td><td><svg><use href="#apply"/></svg></td><td></td></tr>
              <tr class="ro"><td></td><th>QID</th><td>541556</td><td></td><td><svg><use href="#apply"/></svg></td><td></td></tr>
              <tr><td></td><th>Floor Space</th><td class="num">0,00</td><td><svg><use href="#reset"/></svg></td><td><svg><use href="#apply"/></svg></td><td></td></tr>
              <tr><td></td><th>Required Products</th><td></td><td><svg><use href="#reset"/></svg></td><td><svg><use href="#apply"/></svg></td><td></td></tr>
              <tr><td></td><th>Restricted Products</th><td></td><td><svg><use href="#reset"/></svg></td><td><svg><use href="#apply"/></svg></td><td></td></tr>
              <tr><td></td><th>Note</th><td>Store for manuals, specially for Firs...</td><td><svg><use href="#reset"/></svg></td><td><svg><use href="#apply"/></svg></td><td></td></tr>
              <tr class="sec"><td><svg class="c"><use href="#cdn"/></svg></td><th colspan="5">Important Dates</th></tr>
              <tr class="ro"><td></td><th>Last Change</th><td>5/19/2022, 10:02 AM</td><td></td><td><svg><use href="#apply"/></svg></td><td></td></tr>
              <tr><td></td><th>Opened Date</th><td></td><td><svg><use href="#reset"/></svg></td><td><svg><use href="#apply"/></svg></td><td></td></tr>
              <tr><td></td><th>Closed Date</th><td></td><td><svg><use href="#reset"/></svg></td><td><svg><use href="#apply"/></svg></td><td></td></tr>
              <tr><td></td><th>Rebuilding From</th><td></td><td><svg><use href="#reset"/></svg></td><td><svg><use href="#apply"/></svg></td><td></td></tr>
              <tr><td></td><th>Rebuilding To</th><td></td><td><svg><use href="#reset"/></svg></td><td><svg><use href="#apply"/></svg></td><td></td></tr>
              <tr><td></td><th>Floor Plan Rebuilding Date</th><td>4/1/2021</td><td><svg><use href="#reset"/></svg></td><td><svg><use href="#apply"/></svg></td><td></td></tr>
              <tr class="sec"><td><svg class="c"><use href="#cdn"/></svg></td><th colspan="5">Shelf Label Types</th></tr>
              <tr><td></td><th>Disable Shelf Label Type Print Merge</th><td class="chk"><input type="checkbox" aria-label="Disable Shelf Label Type Print Merge"></td><td><svg><use href="#reset"/></svg></td><td><svg><use href="#apply"/></svg></td><td></td></tr>
              <tr><td></td><th>Split Shelf Label Templates</th><td class="chk"><input type="checkbox" aria-label="Split Shelf Label Templates"></td><td><svg><use href="#reset"/></svg></td><td><svg><use href="#apply"/></svg></td><td></td></tr>
              <tr><td></td><th>Default Shelf Label Type</th><td>No Shelf Labels</td><td><svg><use href="#reset"/></svg></td><td><svg><use href="#apply"/></svg></td><td></td></tr>
              <tr><td></td><th>Custom Shelf Label Types</th><td></td><td><svg><use href="#reset"/></svg></td><td><svg><use href="#apply"/></svg></td><td></td></tr>
              <tr class="last"><td></td><th>Not Placed Products Filter</th><td></td><td><svg><use href="#reset"/></svg></td><td><svg><use href="#apply"/></svg></td><td></td></tr>
            </tbody>
          </table>
          <div class="vbar"><span class="thumb"></span></div>
        </div>
      </div>
      <nav class="vtabs">
        <button class="sel"><svg class="i"><use href="#house"/></svg>Store</button>
        <button><svg class="i"><use href="#cab"/></svg>Component</button>
        <button><svg class="i"><use href="#cblocks"/></svg>Component Blocks</button>
        <button><svg class="i"><use href="#prod"/></svg>Products</button>
        <button><svg class="i"><use href="#pblocks"/></svg>Planogram Blocks</button>
        <button><svg class="i"><use href="#pic"/></svg>Photos</button>
        <button><svg class="i"><use href="#tool"/></svg>Tool</button>
      </nav>
      <div class="frame"></div>
      <div class="callout three"><p>The following 7 fixtures<br>are currently in the Winter<br>layer.</p>
        <svg viewBox="2352 695 185 90"><path class="f" d="M2362 781v-4L2423 706l104 71v4z"/><path class="s" d="M2360 777h2L2423 706l104 71h2"/></svg></div>
    </aside>
  </div>
</div>
</body>
</html>
```
FILE: styles.css
```css
* { box-sizing: border-box; }
body {
  margin: 0;
  height: 100vh;
  overflow: hidden;
  background: #2b1260;
  color: #111;
  font: 19px/24px "Noto Sans", "Open Sans", sans-serif;
}
button, input { font: inherit; color: inherit; margin: 0; }
button { border: 0; background: none; padding: 0; }
.defs { position: absolute; width: 0; height: 0; }
.i { width: 26px; height: 26px; flex: none; display: block; }

.window {
  height: calc(100vh - 2px);
  display: flex;
  flex-direction: column;
  background: #ededed;
  border-radius: 0 0 16px 12px;
  overflow: hidden;
}

/* title bar */
.titlebar {
  height: 38px;
  flex: none;
  display: flex;
  align-items: center;
  gap: 13px;
  padding: 0 9px 4px;
  background: linear-gradient(#e9e9e9, #d3d3d3);
  border-bottom: 1px solid #b9b9b9;
}
.titlebar h1 {
  flex: 1;
  margin: 0 100px 0 0;
  text-align: center;
  font: 700 22px/24px "Liberation Sans", Arial, sans-serif;
  color: #2a2a2a;
}
.light { width: 19px; height: 19px; border-radius: 50%; }
.red { background: #ec6a5e; }
.yellow { background: #f5bd4f; }
.green { background: #61c354; }

/* toolbar */
.toolbar {
  height: 49px;
  flex: none;
  display: flex;
  align-items: center;
  padding: 0 2px 0;
}
.btn {
  height: 35px;
  display: flex;
  align-items: center;
  gap: 6px;
  padding: 0 8px 0 7px;
  border-radius: 8px;
  background: #fff;
  box-shadow: 0 1px 2px #0003;
  font-size: 17px;
}
.open { margin-left: 18px; }
.tb { width: 34px; height: 34px; display: grid; place-items: center; flex: none; }
.tb.on { background: #a5c0e6; }
.undo { margin-left: 30px; }
.redo { margin-left: 23px; }
.modes { display: flex; gap: 11px; margin: 0 5px 0 22px; }
.field {
  height: 33px;
  padding: 0 3px;
  border: 0;
  border-bottom: 1px solid #c4c4c4;
  background: #fff;
  font-size: 22px;
}
.date { width: 184px; margin-left: 12px; }
.spin {
  width: 32px;
  height: 33px;
  margin-left: 10px;
  display: grid;
  place-items: center;
  border-radius: 8px;
  background: #fff;
  box-shadow: 0 1px 2px #0003;
}
.spin svg { width: 14px; height: 20px; }
.zooms { display: flex; gap: 10px; margin: 0 14px 0 21px; }
.pct { width: 64px; }
.cancel { margin-left: 21px; }

/* frame of the work area */
.main { flex: 1; min-height: 0; display: flex; }
.work { flex: 1; min-width: 0; display: flex; flex-direction: column; }
.upper { flex: 1; min-height: 0; display: flex; gap: 8px; }

.tools {
  width: 133px;
  flex: none;
  overflow: hidden;
  padding: 1px 6px 0 3px;
  border: 1px solid #c2c2c2;
  border-left: 0;
}
.tools fieldset {
  display: grid;
  grid-template-columns: repeat(3, 34px);
  gap: 4px;
  margin: 0 0 10px;
  padding: 8px 0 5px 7px;
  border: 1px solid #b4b4b4;
  min-width: 0;
}
.tools legend { padding: 2px 4px 0; font-size: 21px; line-height: 22px; }

.canvas {
  flex: 1;
  min-width: 0;
  display: flex;
  flex-direction: column;
  border: 1px solid #bdbdbd;
  margin-right: 4px;
}
.stage { position: relative; flex: 1; min-height: 0; overflow: hidden; }
.plan { display: block; font-family: "Liberation Sans", Arial, sans-serif; }
.rl { font-family: "Noto Sans", sans-serif; font-size: 15px; fill: #222; }

/* scroll bars */
.hbar { height: 20px; flex: none; padding: 4px 3px; background: #fafafa; border-top: 1px solid #e4e4e4; }
.hbar .thumb { display: block; height: 12px; width: 93%; border-radius: 6px; background: #c1c1c1; }
.vbar { width: 22px; flex: none; padding: 3px 5px; background: #fafafa; border-left: 1px solid #e6e6e6; }
.vbar .thumb { display: block; width: 12px; height: 100%; border-radius: 6px; background: #c1c1c1; }

/* call-outs */
.callout {
  position: absolute;
  z-index: 2;
  display: flex;
  align-items: center;
  justify-content: center;
  border: 6px solid #387bbd;
  border-radius: 68px;
  background: #eff4f9;
  color: #387bbd;
  font: 47px/64px "Liberation Sans", Arial, sans-serif;
  text-align: center;
}
.callout p { margin: 0 0 6px; white-space: nowrap; }
.callout svg { position: absolute; }
.callout .f { fill: #eff4f9; }
.callout .s { fill: none; stroke: #387bbd; stroke-width: 6; }
.one { left: 255px; top: 403px; width: 902px; height: 418px; }
.one svg { left: 512px; top: -127px; width: 240px; height: 130px; }
.two { left: 1295px; top: 360px; width: 576px; height: 350px; }
.two svg { left: 322px; top: 336px; width: 160px; height: 130px; }
.three { left: 145px; top: 687px; width: 664px; height: 266px; border-radius: 50px; }
.three p { margin: 0; }
.three svg { left: 97px; top: -85px; width: 185px; height: 90px; }
.frame {
  position: absolute;
  z-index: 1;
  left: 35px;
  top: 261px;
  width: 834px;
  height: 352px;
  border: 6px solid #387bbd;
  border-radius: 18px;
}

.grip {
  height: 8px;
  flex: none;
  border-bottom: 1px solid #bdbdbd;
  background: repeating-linear-gradient(90deg, #aaa 0 1px, transparent 1px 4px) center / 40px 4px no-repeat;
}

/* store list */
.lower { display: flex; flex: none; height: 283px; }
.exports { width: 58px; flex: none; display: flex; flex-direction: column; align-items: center; gap: 13px; padding: 10px 8px 0 0; border-bottom: 1px solid #bdbdbd; }
.listing { flex: 1; min-width: 0; display: flex; flex-direction: column; }
.listbar { height: 51px; flex: none; display: flex; align-items: center; padding: 3px 0 0 7px; }
.search { height: 33px; display: flex; align-items: center; padding-left: 9px; background: #fff; border-bottom: 1px solid #c4c4c4; }
.search input { flex: 1; min-width: 0; border: 0; outline: 0; background: none; }
.listbar .search { width: 455px; margin-left: 16px; }
.lbl { margin-left: 20px; font-size: 21px; }
.filter { margin-left: 17px; }
.gridbox { flex: 1; min-height: 0; margin: 0 4px 2px 0; display: flex; flex-direction: column; border: 1px solid #b5b5b5; padding: 2px 0 0 1px; background: #fff; }
.gridrow { flex: 1; min-height: 0; display: flex; }
.gridbox .vbar { padding-top: 50px; width: 19px; padding-left: 1px; }
.gridbox .vbar .thumb { height: 30px; }
.gridbox .hbar .thumb { width: 616px; margin: 0; }
.gridbox .hbar { padding: 2px 0; }

table { border-collapse: separate; border-spacing: 0; table-layout: fixed; }
td, th { padding: 0; text-align: left; white-space: nowrap; }
.stores { flex: 1; min-width: 0; width: 100%; font-size: 18px; align-self: flex-start; }
.c1 { width: 74px; } .c2 { width: 133px; } .c3 { width: 240px; } .c4 { width: 108px; }
.c6 { width: 128px; } .c7 { width: 119px; } .c8 { width: 49px; }
.stores th {
  height: 50px;
  padding: 0 0 0 5px;
  font-weight: 400;
  font-size: 17px;
  line-height: 19px;
  background: linear-gradient(#fbfbfb, #e9e9e9 50%, #f4f4f4);
  border-right: 1px solid #c0c0c0;
  border-bottom: 2px solid #bcbcbc;
}
.stores td { height: 25px; line-height: 24px; padding-left: 3px; border-right: 1px solid #ececec; border-bottom: 1px solid #e6e6e6; }
.stores tr:nth-child(4n) td { height: 26px; }
.stores td:first-child { text-align: right; padding-right: 33px; color: #444; font-weight: 600; }
.stores th:last-child, .stores td:last-child { border-right: 0; }

.tabs { height: 34px; flex: none; display: flex; align-items: center; border-top: 1px solid #c2c2c2; }
.tabs button { height: 27px; display: flex; align-items: center; gap: 6px; padding: 0 15px 0 19px; font-size: 18px; border-right: 2px solid #c2c2c2; white-space: nowrap; }
.tabs button:first-child, .tabs .sel { border-right: 0; }
.tabs button:first-child { padding: 0 21px 0 20px; }
.tabs .sel, .vtabs .sel { font-weight: 700; background: linear-gradient(#a9c8f0, #6fa6ee 45%, #63a5f5 55%, #a4e0ff); }
.tabs .sel { height: 31px; border-bottom: 2px solid #2d62c9; }

/* right side */
.side { position: relative; width: 924px; flex: none; display: flex; }
.panels { width: 893px; flex: none; padding: 0 4px 0 6px; display: flex; flex-direction: column; border-left: 1px solid #c2c2c2; }
.treebar { height: 47px; flex: none; display: flex; align-items: center; padding: 0 4px 2px 7px; }
.treebar .search { flex: 1; margin-left: 16px; }
.treebox { height: 748px; flex: none; display: flex; overflow: hidden; border: 1px solid #b9b9b9; padding: 2px 0 0 1px; background: #fff; }
.layers { flex: 1; width: 100%; align-self: flex-start; font-size: 20px; }
.mk { width: 356px; }
.layers th { height: 26px; padding-left: 5px; font-weight: 400; font-size: 18px; line-height: 22px; background: linear-gradient(#fafafa, #ebebeb 60%, #f4f4f4); border-right: 1px solid #b5b5b5; border-bottom: 2px solid #bcbcbc; }
.layers td { height: 38px; border-right: 1px solid #ececec; border-bottom: 1px solid #ececec; }
.treebox .vbar { padding-top: 28px; }
.n { display: flex; align-items: center; }
.c { width: 14px; height: 14px; flex: none; margin-right: 10px; color: #a8a8a8; }
.n .i { margin-right: 8px; }
.l1 { padding-left: 5px; } .l2 { padding-left: 31px; } .l3 { padding-left: 56px; } .l4 { padding-left: 106px; }
.b { font-weight: 700; }
.cur td { background: #1b47d8; color: #fff; border-color: #fff; }
.cur .c { color: #fff; }
.cur .i { background: #fff; box-shadow: 0 0 0 3px #fff; }
input[type="checkbox"] {
  appearance: none;
  width: 22px;
  height: 22px;
  border: 1px solid #c9c9c9;
  border-radius: 6px;
  background: #fff;
  display: block;
  margin: 0 auto;
}
.split { height: 17px; flex: none; padding: 2px 0 0 16px; }
.split svg { width: 40px; height: 10px; display: block; }
.props-search { margin: 2px 4px 8px 4px; flex: none; }
.propbox { flex: 1; min-height: 0; display: flex; overflow: hidden; border: 1px solid #b9b9b9; border-bottom: 0; background: #fff; }
.props { flex: 1; width: 100%; align-self: flex-start; }
.p1 { width: 26px; } .p2 { width: 410px; } .p4 { width: 26px; }
.props td, .props th { height: 25px; line-height: 24px; padding-left: 2px; border-bottom: 1px solid #ececec; }
.props th { font-size: 20px; }
.props tr:nth-child(4n) td, .props tr:nth-child(4n) th { height: 26px; }
.props td { border-left: 1px solid #ececec; }
.props td:first-child, .props .sec td, .props .sec th { background: #ebebeb; border-left: 0; }
.props tr:nth-child(even) { background: #f9f9f9; }
.props svg { width: 20px; height: 20px; display: block; }
.props .c { width: 14px; height: 14px; margin-left: 2px; }
.props .sec th { color: #555; font-size: 19px; }
.props .ro th { color: #8a8a8a; font-size: 19px; font-weight: 600; }
.props .num { text-align: right; padding-right: 2px; }
.props .last th { line-height: 20px; vertical-align: top; }

.vtabs { flex: 1; min-width: 0; padding-top: 6px; display: flex; flex-direction: column; align-items: stretch; }
.vtabs button { writing-mode: vertical-rl; display: flex; align-items: center; gap: 6px; padding: 9px 0 8px; font-size: 18px; line-height: 26px; border-bottom: 2px solid #c2c2c2; }
.vtabs .sel { background: linear-gradient(90deg, #8fd0f5, #a8c8f4 60%, #4f83d8); padding: 7px 0 10px; border: 0; }
```
